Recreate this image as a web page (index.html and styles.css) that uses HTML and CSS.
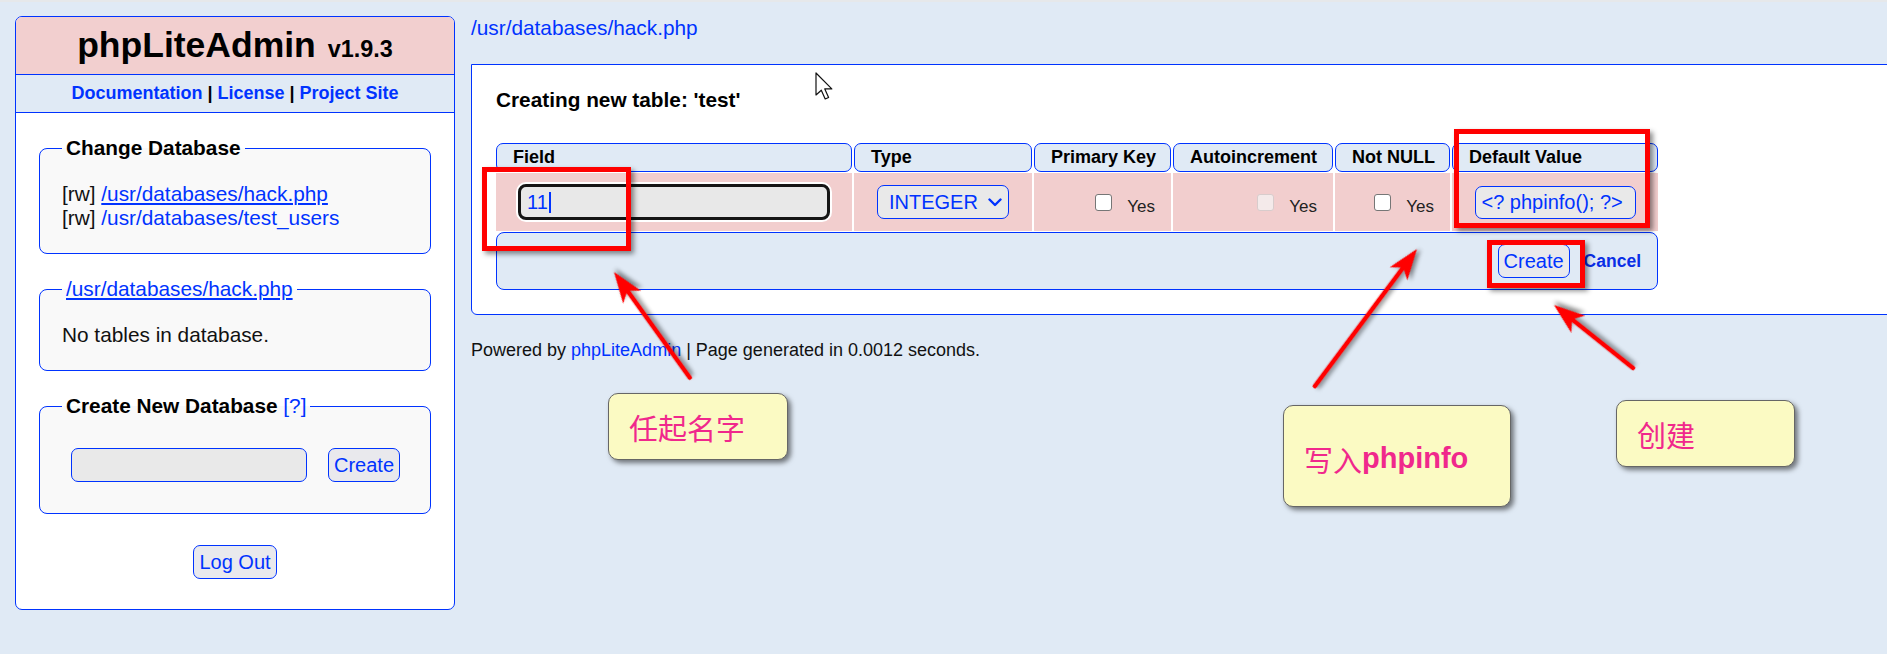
FILE: index.html
```html
<!DOCTYPE html>
<html lang="en">
<head>
<meta charset="utf-8">
<title>phpLiteAdmin</title>
<link rel="stylesheet" href="styles.css">
</head>
<body>
<div class="page">
  <aside class="sidebar">
    <div class="brand"><span class="brand-name">phpLiteAdmin</span><span class="brand-ver">v1.9.3</span></div>
    <div class="doc-links"><a class="link">Documentation</a> | <a class="link">License</a> | <a class="link">Project Site</a></div>
    <div class="side-body">
      <fieldset class="box">
        <legend class="box-title">Change Database</legend>
        <div class="box-text">
          <div>[rw] <a class="link u">/usr/databases/hack.php</a></div>
          <div>[rw] <a class="link">/usr/databases/test_users</a></div>
        </div>
      </fieldset>
      <fieldset class="box">
        <legend class="box-title plain"><a class="link u">/usr/databases/hack.php</a></legend>
        <div class="box-text">No tables in database.</div>
      </fieldset>
      <fieldset class="box">
        <legend class="box-title">Create New Database <a class="link help">[?]</a></legend>
        <div class="create-row"><span class="text-input"></span><span class="btn">Create</span></div>
      </fieldset>
      <div class="logout-row"><span class="btn">Log Out</span></div>
    </div>
  </aside>

  <main class="main">
    <a class="link crumb">/usr/databases/hack.php</a>
    <section class="panel">
      <h2 class="panel-title">Creating new table: 'test'</h2>
      <div class="grid">
        <div class="th">Field</div>
        <div class="th">Type</div>
        <div class="th">Primary Key</div>
        <div class="th">Autoincrement</div>
        <div class="th">Not NULL</div>
        <div class="th">Default Value</div>

        <div class="td center"><div class="field-input">11<span class="caret"></span></div></div>
        <div class="td center">
          <div class="select">INTEGER
            <svg class="chev" width="14" height="9" viewBox="0 0 14 9"><path d="M1.5 1.5 L7 7 L12.5 1.5" fill="none" stroke="#0033ff" stroke-width="2.4" stroke-linecap="round" stroke-linejoin="round"/></svg>
          </div>
        </div>
        <div class="td right"><span class="check"></span><span class="yes">Yes</span></div>
        <div class="td right"><span class="check disabled"></span><span class="yes">Yes</span></div>
        <div class="td right"><span class="check"></span><span class="yes">Yes</span></div>
        <div class="td center"><div class="default-input">&lt;? phpinfo(); ?&gt;</div></div>

        <div class="tfoot"><span class="btn">Create</span><a class="cancel">Cancel</a></div>
      </div>
    </section>
    <p class="powered">Powered by <a class="link">phpLiteAdmin</a> | Page generated in 0.0012 seconds.</p>
  </main>
</div>

<div class="annot">
  <div class="redbox rb1"></div>
  <div class="redbox rb2"></div>
  <div class="redbox rb3"></div>
  <svg class="arrows" width="1887" height="654" viewBox="0 0 1887 654">
    <g class="arrow" transform="translate(614 270) rotate(-125.65)">
      <line x1="-130" y1="0" x2="-20" y2="0"/>
      <polygon points="0,0 -31,-11 -23,0 -31,11"/>
    </g>
    <g class="arrow" transform="translate(1417 247) rotate(-53.33)">
      <line x1="-171" y1="0" x2="-20" y2="0"/>
      <polygon points="0,0 -31,-11 -23,0 -31,11"/>
    </g>
    <g class="arrow" transform="translate(1554 303) rotate(-141.43)">
      <line x1="-101" y1="0" x2="-20" y2="0"/>
      <polygon points="0,0 -31,-11 -23,0 -31,11"/>
    </g>
  </svg>
  <div class="note n1">任起名字</div>
  <div class="note n2">写入<b class="latin">phpinfo</b></div>
  <div class="note n3">创建</div>
  <svg class="cursor" width="20" height="30" viewBox="0 0 20 30">
    <path d="M1 1 V23 L6.3 18.2 L10.2 27 L13.6 25.5 L9.8 16.9 L16.8 16.9 Z" fill="#fff" stroke="#111" stroke-width="1.2" stroke-linejoin="round"/>
  </svg>
</div>
</body>
</html>
```

FILE: styles.css
```css
html, body {
  margin: 0;
  padding: 0;
  background: #e0eaf5;
  overflow: hidden;
}
body {
  width: 1887px;
  height: 654px;
  position: relative;
  font-family: "Liberation Sans", Arial, sans-serif;
  color: #000;
  border-top: 2px solid #e6e8ea;
  box-sizing: border-box;
}
.link { color: #0033ff; text-decoration: none; }
.link.u { text-decoration: underline; }

.page {
  display: flex;
  align-items: flex-start;
  padding: 14px 0 0 15px;
}

/* ---------- sidebar ---------- */
.sidebar {
  width: 440px;
  flex: none;
  box-sizing: border-box;
  border: 1px solid #0033ff;
  border-radius: 7px;
  background: #fff;
  overflow: hidden;
  padding-bottom: 30px;
}
.brand {
  height: 57px;
  line-height: 56px;
  background: #f2cfcf;
  border-bottom: 1px solid #0033ff;
  text-align: center;
  font-weight: bold;
  white-space: nowrap;
}
.brand-name { font-size: 35.5px; }
.brand-ver { font-size: 23.4px; margin-left: 12px; }
.doc-links {
  height: 37px;
  line-height: 37px;
  background: #e0eaf5;
  border-bottom: 1px solid #0033ff;
  text-align: center;
  font-weight: bold;
  font-size: 18px;
}
.side-body { padding: 23px 23px 0; }
.box {
  margin: 0 0 23px;
  padding: 22px 22px 23px;
  border: 1px solid #0033ff;
  border-radius: 8px;
  background: #f9f9f9;
  min-width: 0;
}
.box-title {
  padding: 0 4px;
  font-size: 20.8px;
  line-height: 24px;
  font-weight: bold;
}
.box-title.plain { font-weight: normal; }
.help { font-weight: normal; }
.box-text {
  font-size: 20.8px;
  line-height: 24px;
  color: #111;
}
.create-row {
  display: flex;
  align-items: center;
  gap: 21px;
  padding: 8px 0 8px 9px;
}
.text-input {
  width: 236px;
  height: 34px;
  box-sizing: border-box;
  border: 1px solid #0033ff;
  border-radius: 7px;
  background: #e9e9e9;
}
.btn {
  display: inline-flex;
  align-items: center;
  height: 34px;
  box-sizing: border-box;
  padding: 0 5px;
  border: 1px solid #0033ff;
  border-radius: 7px;
  background: #e9e9ed;
  color: #0033ff;
  font-size: 20px;
}
.logout-row {
  padding-top: 8px;
  text-align: center;
  line-height: 0;
}

/* ---------- main ---------- */
.main {
  flex: none;
  width: 1420px;
  margin-left: 16px;
}
.crumb {
  display: block;
  font-size: 20.8px;
  line-height: 24px;
}
.panel {
  margin-top: 24px;
  background: #fff;
  border: 1px solid #0033ff;
  border-radius: 0 0 0 6px;
  padding: 23px 24px 24px;
}
.panel-title {
  margin: 0 0 31px;
  font-size: 20.8px;
  line-height: 24px;
  font-weight: bold;
}
.grid {
  display: grid;
  grid-template-columns: 356px 178px 137px 160px 115px 206px;
  grid-template-rows: 29px 58px 58px;
  column-gap: 2px;
  row-gap: 1px;
  width: max-content;
}
.th {
  box-sizing: border-box;
  border: 1px solid #0033ff;
  border-radius: 7px;
  background: #e0eaf5;
  font-weight: bold;
  font-size: 18px;
  padding-left: 16px;
  display: flex;
  align-items: center;
  white-space: nowrap;
}
.td {
  background: #f2cece;
  display: flex;
  align-items: center;
}
.td.center { justify-content: center; }
.td.right { justify-content: flex-end; padding-right: 16px; }
.field-input {
  box-sizing: border-box;
  width: 312px;
  height: 36px;
  border: 3px solid #151515;
  border-radius: 8px;
  background: #e8e8e8;
  box-shadow: 0 0 0 2px #fff;
  color: #0033ff;
  font-size: 20px;
  padding-left: 6px;
  display: flex;
  align-items: center;
}
.caret {
  width: 2px;
  height: 21px;
  background: #0033ff;
  margin-left: 1px;
}
.select {
  box-sizing: border-box;
  width: 132px;
  height: 34px;
  border: 1px solid #0033ff;
  border-radius: 7px;
  background: #e9e9e9;
  color: #0033ff;
  font-size: 20px;
  padding-left: 11px;
  display: flex;
  align-items: center;
}
.chev { margin-left: auto; margin-right: 6px; }
.check {
  width: 17px;
  height: 17px;
  box-sizing: border-box;
  border: 1.5px solid #767676;
  border-radius: 3px;
  background: #fff;
  margin-right: 15px;
}
.check.disabled {
  border-color: #d8cccc;
  background: #f4eaea;
}
.yes {
  font-size: 17px;
  color: #222;
  padding-top: 10px;
}
.default-input {
  box-sizing: border-box;
  width: 161px;
  height: 33px;
  border: 1px solid #0033ff;
  border-radius: 7px;
  background: #e9e9e9;
  color: #0033ff;
  font-size: 20px;
  padding-left: 6px;
  display: flex;
  align-items: center;
  white-space: nowrap;
}
.tfoot {
  grid-column: 1 / -1;
  box-sizing: border-box;
  background: #e0eaf5;
  border: 1px solid #0033ff;
  border-radius: 8px;
  display: flex;
  justify-content: flex-end;
  align-items: center;
  gap: 14px;
  padding-right: 16px;
}
.cancel {
  color: #0a2fe6;
  font-weight: bold;
  font-size: 17.5px;
}
.powered {
  margin: 25px 0 0;
  font-size: 18px;
  line-height: 20px;
  color: #111;
}

/* ---------- annotations ---------- */
.annot {
  position: absolute;
  left: 0;
  top: 0;
  width: 1887px;
  height: 654px;
  pointer-events: none;
}
.redbox {
  position: absolute;
  box-sizing: border-box;
  border: 5px solid #ff0000;
  box-shadow: 3px 3px 5px rgba(0,0,0,.45);
}
.rb1 { left: 482px; top: 165px; width: 149px; height: 84px; }
.rb2 { left: 1454px; top: 127px; width: 196px; height: 99px; }
.rb3 { left: 1487px; top: 238px; width: 98px; height: 48px; }
.arrows { position: absolute; left: 0; top: 0; }
.arrow { filter: drop-shadow(2px 3px 2px rgba(0,0,0,.45)); }
.arrow line { stroke: #ff0000; stroke-width: 4.5; stroke-linecap: round; }
.arrow polygon { fill: #ff0000; }
.note {
  position: absolute;
  box-sizing: border-box;
  background: #fbfac3;
  border: 1px solid #666;
  border-radius: 10px;
  box-shadow: 3px 3px 5px rgba(0,0,0,.5);
  color: #f0288c;
  display: flex;
  align-items: center;
  font-family: "Noto Sans CJK SC", "Liberation Sans", sans-serif;
  white-space: nowrap;
}
.note .latin { font-family: "Liberation Sans", Arial, sans-serif; font-weight: bold; }
.n1 { left: 608px; top: 391px; width: 180px; height: 67px; padding-left: 20px; font-size: 29px; }
.n2 { left: 1283px; top: 403px; width: 228px; height: 102px; padding: 5px 0 0 20px; font-size: 29px; }
.n3 { left: 1616px; top: 398px; width: 179px; height: 67px; padding-left: 20px; font-size: 29px; }
.cursor { position: absolute; left: 815px; top: 70px; }
```
